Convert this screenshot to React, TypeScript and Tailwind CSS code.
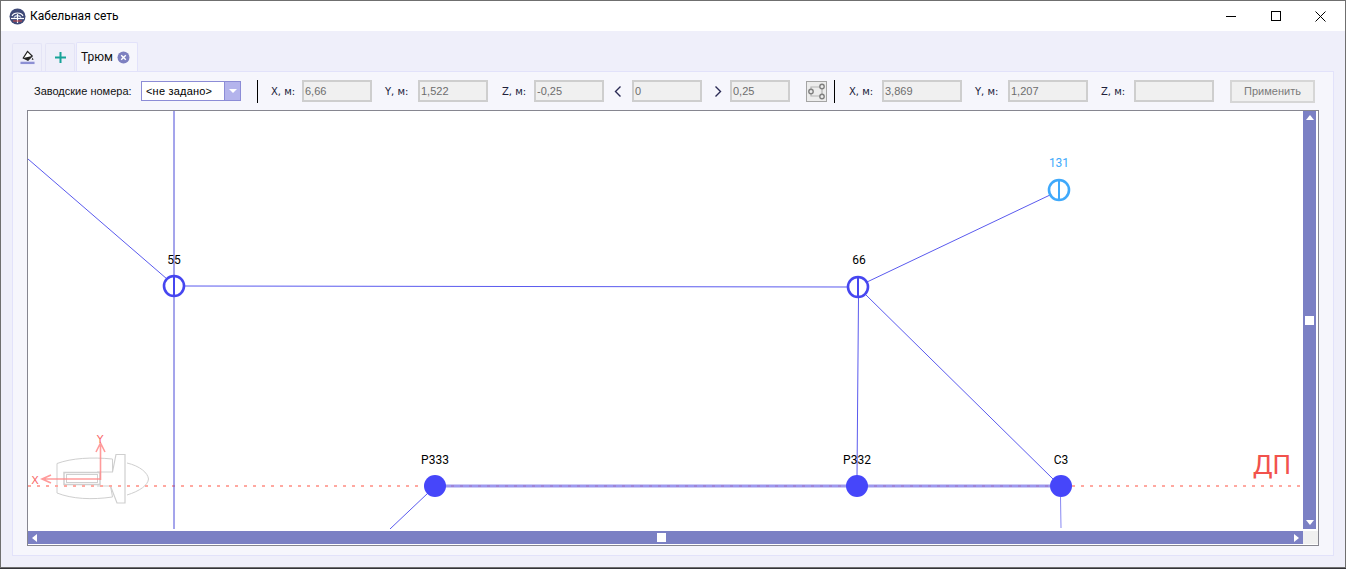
import React from "react"

const Field = ({ label, value, width = "w-[70px]", className = "" }: { label: string; value: string; width?: string; className?: string }) => (
	<div className={`flex items-center ${className}`}>
		<span className="w-[31px] font-['DejaVu_Sans',sans-serif] text-[10px] text-[#20203a] whitespace-pre">{label}</span>
		<div className={`${width} h-[22px] border-2 border-[#cecece] bg-[#f0f0f0] pl-[1px] text-[11px] leading-[18px] text-[#6d6d6d] font-['Liberation_Sans',sans-serif]`}>
			{value}
		</div>
	</div>
)

const Plain = ({ value, width, className = "" }: { value: string; width: string; className?: string }) => (
	<div className={`${width} h-[22px] border-2 border-[#cecece] bg-[#f0f0f0] pl-[1px] text-[11px] leading-[18px] text-[#6d6d6d] font-['Liberation_Sans',sans-serif] ${className}`}>
		{value}
	</div>
)

const Separator = ({ className = "" }: { className?: string }) => <div className={`w-[1px] h-[23px] bg-black ${className}`} />

const Logo = () => (
	<svg width="17" height="17" viewBox="0 0 17 17">
		<circle cx="8.5" cy="8.5" r="8" fill="#3f4a78" />
		<path d="M3 8 C5 4 12 4 14 8" fill="none" stroke="#fff" strokeWidth="1.2" />
		<path d="M5 9.5 C6.5 7 10.5 7 12 9.5" fill="none" stroke="#d8e4f4" strokeWidth="1.2" />
		<path d="M2 10.5 H15" stroke="#fff" strokeWidth="1.2" />
		<path d="M8.5 6 V15" stroke="#fff" strokeWidth="1.2" />
		<path d="M4 13 H13" stroke="#c44" strokeWidth="1" />
	</svg>
)

const BucketIcon = () => (
	<svg width="15" height="15" viewBox="0 0 16 16">
		<path d="M8 1.5 L13 6.5 L8.5 11 L3.5 8.5 Z" fill="#fff" stroke="#222" strokeWidth="1.3" />
		<path d="M3.5 8.5 L13 6.5 L8.5 11 Z" fill="#222" />
		<path d="M13.5 8 L14.5 10.5 L12.5 10.5 Z" fill="#222" />
		<rect x="0.5" y="12.5" width="15" height="2.5" fill="#8d90d4" />
	</svg>
)

const NetworkIcon = () => (
	<svg width="21" height="21" viewBox="0 0 21 21" className="block">
		<rect x="0.5" y="0.5" width="20" height="20" fill="#ececec" stroke="#a4a4a4" />
		<path d="M5 10 V6 H16 M5 11 V15 H16 M16 6 V15" fill="none" stroke="#b4b4b4" strokeWidth="1.2" />
		<circle cx="5" cy="10.5" r="2.2" fill="#ececec" stroke="#808080" strokeWidth="1.4" />
		<circle cx="16" cy="5.5" r="2.2" fill="#ececec" stroke="#808080" strokeWidth="1.4" />
		<circle cx="16" cy="15.5" r="2.2" fill="#ececec" stroke="#808080" strokeWidth="1.4" />
	</svg>
)

const HollowNode = ({ x, y, color }: { x: number; y: number; color: string }) => (
	<g fill="none" stroke={color}>
		<circle cx={x} cy={y} r="10" strokeWidth="2.6" />
		<path d={`M${x} ${y - 10} V${y + 10}`} strokeWidth="2" />
	</g>
)

const Label = ({ x, y, text, color = "#000" }: { x: number; y: number; text: string; color?: string }) => (
	<text x={x} y={y} textAnchor="middle" fontSize="12" fill={color} fontFamily="'Roboto','Open Sans',sans-serif">
		{text}
	</text>
)

const Diagram = () => (
	<svg width="1275" height="418" viewBox="28 111 1275 418" className="block">
		{/* ship */}
		<g fill="none" stroke="#cfcfcf" strokeWidth="1">
			<path d="M112.5 472 V459 C92 457 72 458 57 463.5 V493 C72 499 92 500 112.5 497 L110.5 486" />
			<rect x="64" y="472.5" width="36" height="12" strokeWidth="1.5" />
			<rect x="66.5" y="474.5" width="31" height="8" />
			<path d="M97 472 H112.5 L116 454.5 H125 V503 H117 L110.5 486 H97" strokeWidth="1.2" />
			<path d="M127 463 C140 466 148 473 148.5 479 C148 485 140 491 127 495" />
		</g>
		{/* center line */}
		<path d="M28 486 H1300" stroke="#ffa8a0" strokeWidth="2" strokeDasharray="3 6" />
		{/* axes */}
		<g fill="none" stroke="#ff8a8a" strokeWidth="1.6" opacity="0.85">
			<path d="M100.5 480 V445 M96 452 L100.5 443 L105 452" />
			<path d="M100.5 479 H43 M51 475 L42 479 L51 483" />
		</g>
		<text x="35" y="484" textAnchor="middle" fontSize="11" fill="#f86a6a" fontFamily="'DejaVu Sans',sans-serif">X</text>
		<text x="100" y="443" textAnchor="middle" fontSize="11" fill="#f86a6a" fontFamily="'DejaVu Sans',sans-serif">Y</text>
		{/* cables */}
		<g fill="none" stroke="#5a5aee" strokeWidth="1">
			<path d="M174 111 V529" stroke="#4a4ad8" />
			<path d="M28 159 L167 279" />
			<path d="M184 286 L848 287" />
			<path d="M867 282 L1050 195" />
			<path d="M858.5 297 L857 476" />
			<path d="M865 294 L1053 479" />
			<path d="M428 493 L390 529" />
			<path d="M1060.5 497 L1061 528" stroke="#8888f2" />
		</g>
		<path d="M445 486 H1050" stroke="#7e78ea" strokeWidth="3" opacity="0.75" />
		{/* nodes */}
		<HollowNode x={174} y={286} color="#4646f0" />
		<HollowNode x={858} y={287} color="#4646f0" />
		<HollowNode x={1059} y={190} color="#3fa9fb" />
		<circle cx="435" cy="486" r="11" fill="#4646fa" />
		<circle cx="857" cy="486" r="11" fill="#4646fa" />
		<circle cx="1061" cy="486" r="11" fill="#4646fa" />
		<Label x={174} y={264} text="55" />
		<Label x={859} y={264} text="66" />
		<Label x={1059} y={167} text="131" color="#3fa9fb" />
		<Label x={435} y={464} text="Р333" />
		<Label x={857} y={464} text="Р332" />
		<Label x={1061} y={464} text="С3" />
		<text x="1272" y="474" textAnchor="middle" fontSize="26" fill="#f2524c" fontFamily="'Roboto','Open Sans',sans-serif">ДП</text>
	</svg>
)

export default function App() {
	return (
		<div className="w-[1346px] h-[569px] bg-[#33333a] overflow-hidden font-['Roboto','Open_Sans',sans-serif]">
			<div className="h-[568px] border border-[#6f6f6f] bg-[#efeffa] flex flex-col">
				{/* title bar */}
				<div className="h-[30px] shrink-0 bg-white flex items-center pl-[8px]">
					<Logo />
					<span className="ml-[4px] text-[12px] text-black">Кабельная сеть</span>
					<div className="ml-auto flex items-center h-full">
						<div className="w-[45px] flex justify-center">
							<div className="w-[10px] h-[1px] bg-black" />
						</div>
						<div className="w-[45px] flex justify-center">
							<div className="w-[10px] h-[10px] border border-black" />
						</div>
						<div className="w-[45px] flex justify-center">
							<svg width="11" height="11" viewBox="0 0 11 11">
								<path d="M0.5 0.5 L10.5 10.5 M10.5 0.5 L0.5 10.5" stroke="#000" strokeWidth="1" />
							</svg>
						</div>
						<div className="w-[2px]" />
					</div>
				</div>

				{/* tabs */}
				<div className="h-[40px] shrink-0 flex items-end pl-[11px]">
					<div className="w-[30px] h-[28px] border border-b-0 border-[#e4e4f6] rounded-t-[2px] flex items-center justify-center">
						<BucketIcon />
					</div>
					<div className="ml-[3px] w-[30px] h-[28px] border border-b-0 border-[#e4e4f6] rounded-t-[2px] flex items-center justify-center text-[#17a398]">
						<svg width="11" height="11" viewBox="0 0 11 11">
							<path d="M5.5 0 V11 M0 5.5 H11" stroke="currentColor" strokeWidth="2" />
						</svg>
					</div>
					<div className="ml-[1px] w-[62px] h-[29px] border border-b-0 border-[#e2e2fa] bg-[#f6f6fc] flex items-center pl-[4px] rounded-t-[2px]">
						<span className="w-[36px] text-[12px] text-[#111]">Трюм</span>
						<svg width="13" height="13" viewBox="0 0 13 13">
							<circle cx="6.5" cy="6.5" r="6" fill="#7d80c0" />
							<path d="M4.2 4.2 L8.8 8.8 M8.8 4.2 L4.2 8.8" stroke="#fff" strokeWidth="1.4" />
						</svg>
					</div>
				</div>

				{/* panel */}
				<div className="w-[1322px] h-[485px] ml-[11px] border border-[#e2e2fa] bg-[#f6f6fc] flex flex-col">
					{/* toolbar */}
					<div className="h-[38px] shrink-0 flex items-center pl-[21px]">
						<span className="w-[107px] text-[11px] text-[#111] font-['Liberation_Sans',sans-serif]">Заводские номера:</span>
						<div className="w-[100px] h-[20px] border border-[#8c8cd6] bg-white flex">
							<span className="flex-1 pl-[4px] text-[11px] leading-[18px] text-black font-['Liberation_Sans',sans-serif] tracking-[0.2px]">&lt;не задано&gt;</span>
							<div className="w-[16px] bg-[#b4b4ec] border-l border-[#8c8cd6] flex items-center justify-center">
								<div className="w-0 h-0 border-x-[4px] border-x-transparent border-t-[4px] border-t-white" />
							</div>
						</div>
						<Separator className="ml-[16px]" />
						<Field label="X, м:" value="6,66" className="ml-[13px]" />
						<Field label="Y, м:" value="1,522" className="ml-[13px] [&>span]:w-[33px]" />
						<Field label="Z, м:" value="-0,25" className="ml-[14px] [&>span]:w-[32px]" />
						<span className="ml-[10px] w-[18px] text-[#2a2a55] leading-none">
							<svg width="8" height="11" viewBox="0 0 8 11">
								<path d="M6.5 0.5 L1.5 5.5 L6.5 10.5" fill="none" stroke="currentColor" strokeWidth="1.4" />
							</svg>
						</span>
						<Plain value="0" width="w-[70px]" />
						<span className="ml-[10px] w-[18px] text-[#2a2a55] leading-none pl-[2px]">
							<svg width="8" height="11" viewBox="0 0 8 11">
								<path d="M1.5 0.5 L6.5 5.5 L1.5 10.5" fill="none" stroke="currentColor" strokeWidth="1.4" />
							</svg>
						</span>
						<Plain value="0,25" width="w-[60px]" />
						<div className="ml-[16px]">
							<NetworkIcon />
						</div>
						<Separator className="ml-[7px]" />
						<Field label="X, м:" value="3,869" width="w-[80px]" className="ml-[14px] [&>span]:w-[33px]" />
						<Field label="Y, м:" value="1,207" width="w-[80px]" className="ml-[13px] [&>span]:w-[33px]" />
						<Field label="Z, м:" value="" width="w-[80px]" className="ml-[13px] [&>span]:w-[33px]" />
						<button className="ml-[16px] w-[85px] h-[23px] border-2 border-[#d6d6d6] bg-[#f0f0f0] text-[11px] text-[#7a7a7a] font-['Liberation_Sans',sans-serif]">
							Применить
						</button>
					</div>

					{/* canvas */}
					<div className="ml-[14px] w-[1292px] h-[436px] border border-[#868690] bg-white flex">
						<div className="w-[1275px] flex flex-col">
							<Diagram />
							<div className="mt-[2px] h-[13px] bg-[#7b80c4] flex items-center justify-between px-[4px]">
								<div className="w-0 h-0 border-y-[4px] border-y-transparent border-r-[5px] border-r-white" />
								<div className="w-[9px] h-[9px] bg-white mr-[8px]" />
								<div className="w-0 h-0 border-y-[4px] border-y-transparent border-l-[5px] border-l-white" />
							</div>
						</div>
						<div className="w-[15px] flex flex-col">
							<div className="h-[418px] w-[13px] bg-[#7b80c4] flex flex-col items-center justify-between py-[4px]">
								<div className="w-0 h-0 border-x-[4px] border-x-transparent border-b-[5px] border-b-white" />
								<div className="w-[9px] h-[9px] bg-white" />
								<div className="w-0 h-0 border-x-[4px] border-x-transparent border-t-[5px] border-t-white" />
							</div>
							<div className="mt-[2px] h-[13px] w-[15px] bg-[#f0f0f0]" />
						</div>
					</div>
				</div>
			</div>
		</div>
	)
}
